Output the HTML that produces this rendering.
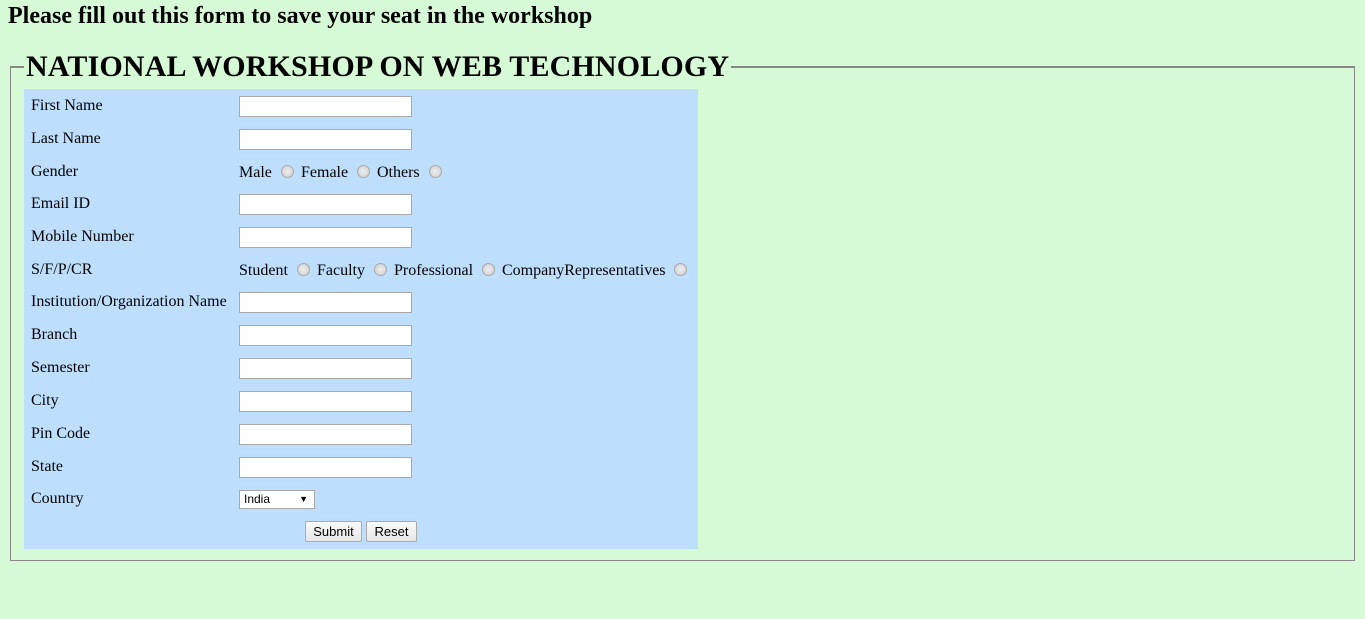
<!DOCTYPE html>
<html><head><style>
body{margin:0;background:#d6f9d6;font-family:"Liberation Serif",serif;width:1365px;height:619px;position:relative;overflow:hidden;color:#000}
.a{position:absolute;white-space:nowrap}
.h{left:8px;top:3px;font-size:24px;font-weight:bold}
.fs{left:10px;top:66px;width:1343px;height:492px;border:1px solid #888;border-width:2px 1px 1px 1px;border-color:#888}
.lg{left:24px;top:50px;font-size:30px;font-weight:bold;background:#d6f9d6;padding:0 2px;letter-spacing:0.15px}
.tb{left:24px;top:89px;width:674px;height:460px;background:#bddffd}
.l{left:31px;font-size:16px}
.in{left:239px;width:171px;height:19px;background:#fff;border:1px solid #a9a9a9}
.t{font-size:16px}
.r{width:11px;height:11px;border-radius:50%;border:1px solid #aaa;background:radial-gradient(#eee,#ccc)}
.btn{top:521px;height:19px;border:1px solid #aaa;background:linear-gradient(#fafafa,#e6e6e6);font-family:"Liberation Sans",sans-serif;font-size:13px;text-align:center;line-height:19px;border-radius:2px}
</style></head><body>
<div class="a h">Please fill out this form to save your seat in the workshop</div>
<div class="a fs"></div>
<div class="a lg">NATIONAL WORKSHOP ON WEB TECHNOLOGY</div>
<div class="a tb"></div>

<div class="a l" style="top:97px">First Name</div><div class="a in" style="top:96px"></div>
<div class="a l" style="top:130px">Last Name</div><div class="a in" style="top:129px"></div>
<div class="a l" style="top:163px">Gender</div>
<div class="a t" style="left:239px;top:164px">Male</div><div class="a r" style="left:281px;top:165px"></div>
<div class="a t" style="left:301px;top:164px">Female</div><div class="a r" style="left:357px;top:165px"></div>
<div class="a t" style="left:377px;top:164px">Others</div><div class="a r" style="left:429px;top:165px"></div>
<div class="a l" style="top:195px">Email ID</div><div class="a in" style="top:194px"></div>
<div class="a l" style="top:228px">Mobile Number</div><div class="a in" style="top:227px"></div>
<div class="a l" style="top:261px">S/F/P/CR</div>
<div class="a t" style="left:239px;top:262px">Student</div><div class="a r" style="left:297px;top:263px"></div>
<div class="a t" style="left:317px;top:262px">Faculty</div><div class="a r" style="left:374px;top:263px"></div>
<div class="a t" style="left:394px;top:262px">Professional</div><div class="a r" style="left:482px;top:263px"></div>
<div class="a t" style="left:502px;top:262px">CompanyRepresentatives</div><div class="a r" style="left:674px;top:263px"></div>
<div class="a l" style="top:293px">Institution/Organization Name</div><div class="a in" style="top:292px"></div>
<div class="a l" style="top:326px">Branch</div><div class="a in" style="top:325px"></div>
<div class="a l" style="top:359px">Semester</div><div class="a in" style="top:358px"></div>
<div class="a l" style="top:392px">City</div><div class="a in" style="top:391px"></div>
<div class="a l" style="top:425px">Pin Code</div><div class="a in" style="top:424px"></div>
<div class="a l" style="top:458px">State</div><div class="a in" style="top:457px"></div>
<div class="a l" style="top:490px">Country</div>
<div class="a" style="left:239px;top:490px;width:74px;height:17px;background:#fff;border:1px solid #a9a9a9;font-family:'Liberation Sans',sans-serif;font-size:12px;line-height:17px"><span style="padding-left:4px">India</span><span style="position:absolute;right:6px;font-size:9px">▼</span></div>
<div class="a btn" style="left:305px;width:55px">Submit</div>
<div class="a btn" style="left:366px;width:49px">Reset</div>
</body></html>
